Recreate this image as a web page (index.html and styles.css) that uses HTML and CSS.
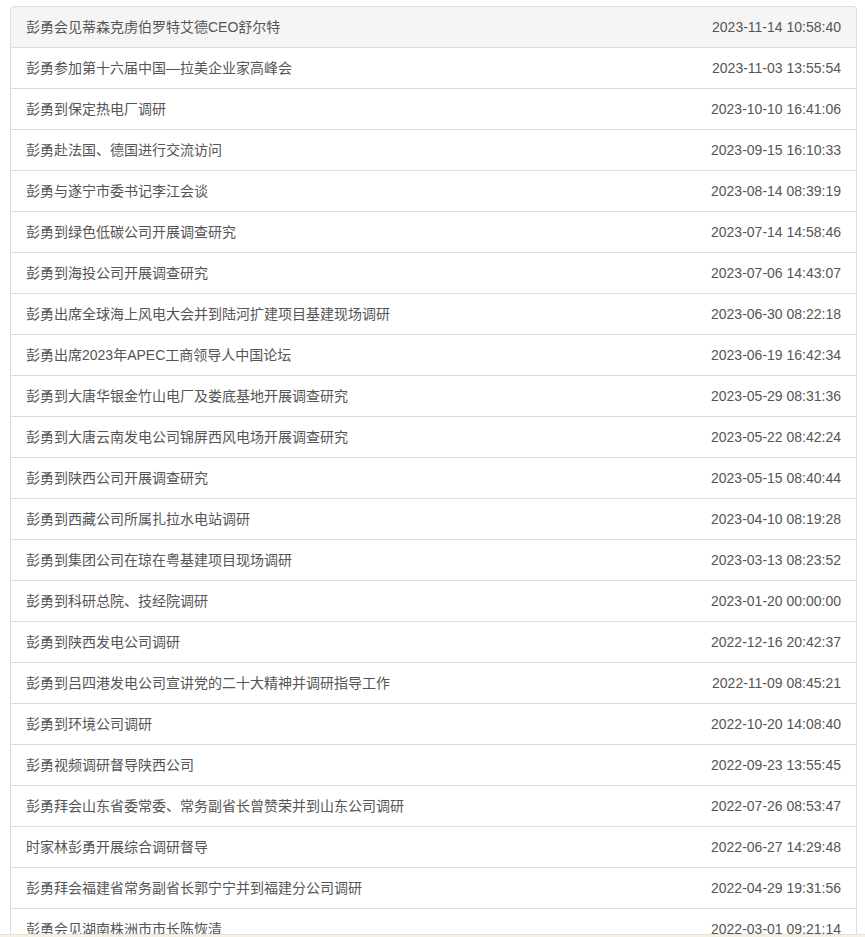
FILE: index.html
```html
<!DOCTYPE html>
<html lang="zh-CN">
<head>
<meta charset="utf-8">
<title>新闻列表</title>
<link rel="stylesheet" href="styles.css">
</head>
<body>
<div class="list-group">
  <a class="list-item active" href="#"><span class="title">彭勇会见蒂森克虏伯罗特艾德CEO舒尔特</span><span class="date">2023-11-14 10:58:40</span></a>
  <a class="list-item" href="#"><span class="title">彭勇参加第十六届中国—拉美企业家高峰会</span><span class="date">2023-11-03 13:55:54</span></a>
  <a class="list-item" href="#"><span class="title">彭勇到保定热电厂调研</span><span class="date">2023-10-10 16:41:06</span></a>
  <a class="list-item" href="#"><span class="title">彭勇赴法国、德国进行交流访问</span><span class="date">2023-09-15 16:10:33</span></a>
  <a class="list-item" href="#"><span class="title">彭勇与遂宁市委书记李江会谈</span><span class="date">2023-08-14 08:39:19</span></a>
  <a class="list-item" href="#"><span class="title">彭勇到绿色低碳公司开展调查研究</span><span class="date">2023-07-14 14:58:46</span></a>
  <a class="list-item" href="#"><span class="title">彭勇到海投公司开展调查研究</span><span class="date">2023-07-06 14:43:07</span></a>
  <a class="list-item" href="#"><span class="title">彭勇出席全球海上风电大会并到陆河扩建项目基建现场调研</span><span class="date">2023-06-30 08:22:18</span></a>
  <a class="list-item" href="#"><span class="title">彭勇出席2023年APEC工商领导人中国论坛</span><span class="date">2023-06-19 16:42:34</span></a>
  <a class="list-item" href="#"><span class="title">彭勇到大唐华银金竹山电厂及娄底基地开展调查研究</span><span class="date">2023-05-29 08:31:36</span></a>
  <a class="list-item" href="#"><span class="title">彭勇到大唐云南发电公司锦屏西风电场开展调查研究</span><span class="date">2023-05-22 08:42:24</span></a>
  <a class="list-item" href="#"><span class="title">彭勇到陕西公司开展调查研究</span><span class="date">2023-05-15 08:40:44</span></a>
  <a class="list-item" href="#"><span class="title">彭勇到西藏公司所属扎拉水电站调研</span><span class="date">2023-04-10 08:19:28</span></a>
  <a class="list-item" href="#"><span class="title">彭勇到集团公司在琼在粤基建项目现场调研</span><span class="date">2023-03-13 08:23:52</span></a>
  <a class="list-item" href="#"><span class="title">彭勇到科研总院、技经院调研</span><span class="date">2023-01-20 00:00:00</span></a>
  <a class="list-item" href="#"><span class="title">彭勇到陕西发电公司调研</span><span class="date">2022-12-16 20:42:37</span></a>
  <a class="list-item" href="#"><span class="title">彭勇到吕四港发电公司宣讲党的二十大精神并调研指导工作</span><span class="date">2022-11-09 08:45:21</span></a>
  <a class="list-item" href="#"><span class="title">彭勇到环境公司调研</span><span class="date">2022-10-20 14:08:40</span></a>
  <a class="list-item" href="#"><span class="title">彭勇视频调研督导陕西公司</span><span class="date">2022-09-23 13:55:45</span></a>
  <a class="list-item" href="#"><span class="title">彭勇拜会山东省委常委、常务副省长曾赞荣并到山东公司调研</span><span class="date">2022-07-26 08:53:47</span></a>
  <a class="list-item" href="#"><span class="title">时家林彭勇开展综合调研督导</span><span class="date">2022-06-27 14:29:48</span></a>
  <a class="list-item" href="#"><span class="title">彭勇拜会福建省常务副省长郭宁宁并到福建分公司调研</span><span class="date">2022-04-29 19:31:56</span></a>
  <a class="list-item" href="#"><span class="title">彭勇会见湖南株洲市市长陈恢清</span><span class="date">2022-03-01 09:21:14</span></a>
</div>
<div class="bottom-bar"></div>
</body>
</html>
```

FILE: styles.css
```css
html, body {
  margin: 0;
  padding: 0;
  background: #fff;
}
body {
  font-family: "Liberation Sans", "Noto Sans CJK SC", sans-serif;
  font-size: 14px;
  color: #555;
}
.list-group {
  display: flex;
  flex-direction: column;
  margin: 6px 8px 20px 10px;
}
.list-item {
  display: flex;
  justify-content: space-between;
  align-items: center;
  padding: 10px 15px;
  line-height: 20px;
  height: 20px;
  border: 1px solid #ddd;
  margin-bottom: -1px;
  color: #555;
  text-decoration: none;
  background: #fff;
}
.list-item:first-child {
  border-top-left-radius: 4px;
  border-top-right-radius: 4px;
}
.list-item.active {
  background: #f5f5f5;
}
.date {
  color: #555;
}
.bottom-bar {
  position: fixed;
  left: 0;
  right: 0;
  bottom: 0;
  height: 2px;
  border-top: 1px solid #e3e3e3;
  background: #f6f1de;
}
```
